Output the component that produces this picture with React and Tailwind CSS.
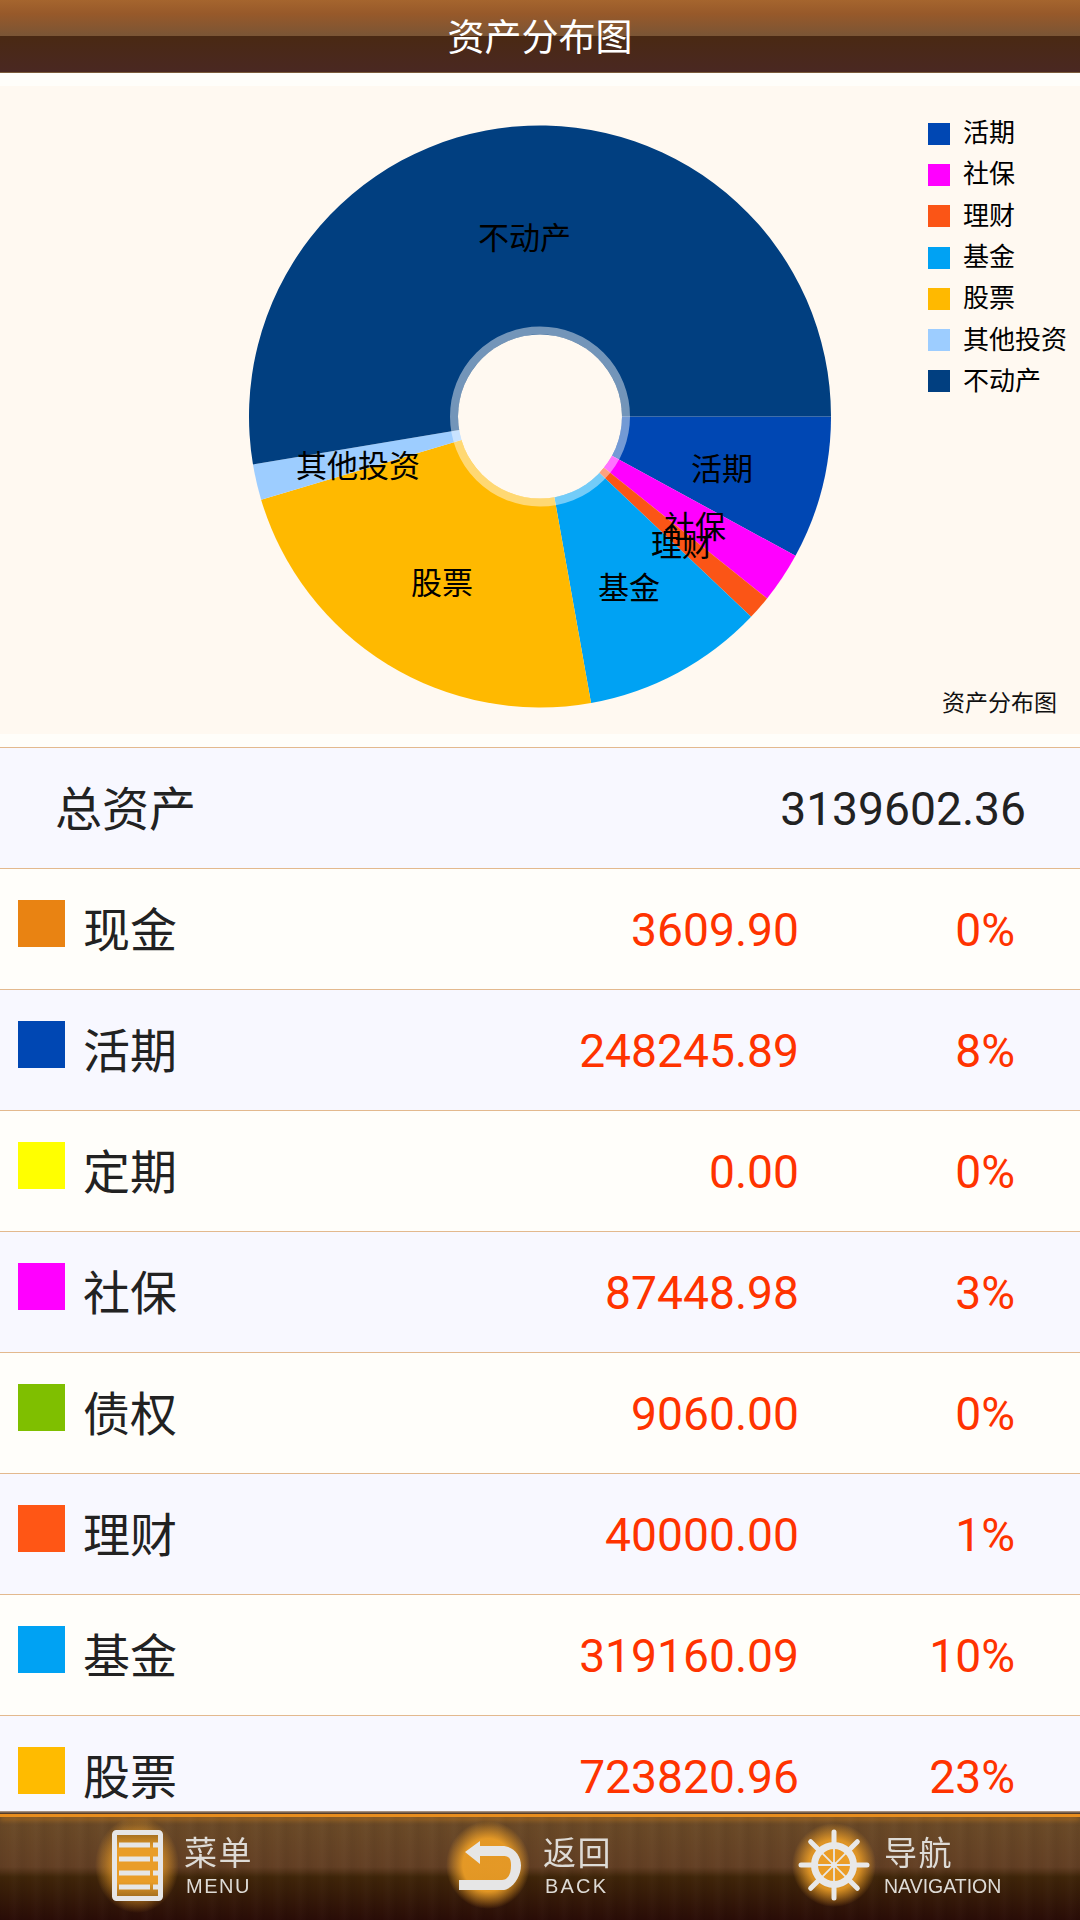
import React from 'react';

const SLICES = [
  { name: '活期', color: '#0047b3', end: 28.6 },
  { name: '社保', color: '#ff00ff', end: 38.7 },
  { name: '理财', color: '#fb5516', end: 43.5 },
  { name: '基金', color: '#00a2f3', end: 79.9 },
  { name: '股票', color: '#ffb900', end: 163.4 },
  { name: '其他投资', color: '#9dcdff', end: 170.5 },
  { name: '不动产', color: '#013f80', end: 360 },
];

const LABELS = [
  { name: '不动产', x: 478, y: 152 },
  { name: '活期', x: 691, y: 383 },
  { name: '社保', x: 664, y: 441 },
  { name: '理财', x: 651, y: 459 },
  { name: '基金', x: 598, y: 502 },
  { name: '股票', x: 411, y: 497 },
  { name: '其他投资', x: 296, y: 380 },
];

const ROWS = [
  { name: '现金', color: '#e98312', amount: '3609.90', pct: '0%' },
  { name: '活期', color: '#0047b3', amount: '248245.89', pct: '8%' },
  { name: '定期', color: '#ffff00', amount: '0.00', pct: '0%' },
  { name: '社保', color: '#ff00ff', amount: '87448.98', pct: '3%' },
  { name: '债权', color: '#7fbf00', amount: '9060.00', pct: '0%' },
  { name: '理财', color: '#ff5615', amount: '40000.00', pct: '1%' },
  { name: '基金', color: '#00a2f3', amount: '319160.09', pct: '10%' },
  { name: '股票', color: '#ffbb00', amount: '723820.96', pct: '23%' },
];

const slicePath = (from, to) => {
  const cx = 540;
  const cy = 330.5;
  const r = 291;
  const rad = (d) => (d * Math.PI) / 180;
  const x1 = cx + r * Math.cos(rad(from));
  const y1 = cy + r * Math.sin(rad(from));
  const x2 = cx + r * Math.cos(rad(to));
  const y2 = cy + r * Math.sin(rad(to));
  const large = to - from > 180 ? 1 : 0;
  return `M${cx} ${cy}L${x1} ${y1}A${r} ${r} 0 ${large} 1 ${x2} ${y2}Z`;
};

function PieChart() {
  return (
    <div className="relative mt-[13px] h-[648px] shrink-0 bg-[#fff9f1]">
      <svg viewBox="0 0 1080 648" className="block h-full w-full">
        {SLICES.map((s, i) => (
          <path key={s.name} d={slicePath(i === 0 ? 0 : SLICES[i - 1].end, s.end)} fill={s.color} />
        ))}
        <circle cx="540" cy="330.5" r="86" fill="none" stroke="#fff" strokeOpacity="0.45" strokeWidth="8" />
        <circle cx="540" cy="330.5" r="82" fill="#fff9f1" />
        {LABELS.map((l) => (
          <text key={l.name} x={l.x} y={l.y} fontSize="31" fill="#000" dominantBaseline="central">
            {l.name}
          </text>
        ))}
      </svg>
      {/* legend sits on top of the chart, like in the canvas */}
      <div className="absolute left-[928px] top-[27px] flex flex-col text-[26px] text-black">
        {SLICES.map((s) => (
          <div key={s.name} className="flex h-[41.3px] items-center gap-[13px] whitespace-nowrap">
            <span className="h-[22px] w-[22px] shrink-0" style={{ backgroundColor: s.color }}></span>
            <span>{s.name}</span>
          </div>
        ))}
      </div>
      <div className="absolute right-[23px] top-[603px] text-[23px] leading-[30px] text-[#111]">资产分布图</div>
    </div>
  );
}

function MenuIcon() {
  return (
    <svg width="51" height="71" viewBox="0 0 51 71" className="overflow-visible">
      <defs>
        <radialGradient id="menuGlow">
          <stop offset="0.6" stopColor="#eb9d26" stopOpacity="0.7" />
          <stop offset="1" stopColor="#eb9d26" stopOpacity="0" />
        </radialGradient>
        <linearGradient id="menuFill" x1="0" y1="0" x2="0" y2="1">
          <stop offset="0" stopColor="#9c6a1f" />
          <stop offset="0.25" stopColor="#e99d28" />
          <stop offset="0.75" stopColor="#e99d28" />
          <stop offset="1" stopColor="#9c6a1f" />
        </linearGradient>
      </defs>
      <ellipse cx="25" cy="35" rx="42" ry="48" fill="url(#menuGlow)" />
      <rect x="2.5" y="2.5" width="46" height="66" rx="2" fill="url(#menuFill)" stroke="#e6e6e6" strokeWidth="5" />
      {[15, 29, 43, 57].map((y) => (
        <g key={y} fill="#e6e6e6">
          <rect x="7" y={y - 2.5} width="31" height="5" />
          <rect x="41" y={y - 2.5} width="5" height="5" />
        </g>
      ))}
    </svg>
  );
}

function BackIcon() {
  return (
    <svg width="62" height="49" viewBox="0 0 62 49" className="overflow-visible">
      <defs>
        <radialGradient id="backGlow">
          <stop offset="0.6" stopColor="#eb9d26" stopOpacity="0.95" />
          <stop offset="1" stopColor="#eb9d26" stopOpacity="0" />
        </radialGradient>
      </defs>
      <ellipse cx="29" cy="24" rx="42" ry="44" fill="url(#backGlow)" />
      <path
        d="M6 11 21 0v5h22c11 0 19 9 19 19.5S54 49 43 49H0V39h43c6 0 9-6 9-14.500S49 15 43 15H21v8Z"
        fill="#e6e6e6"
      />
    </svg>
  );
}

function WheelIcon() {
  const angles = [0, 45, 90, 135, 180, 225, 270, 315];
  return (
    <svg width="72" height="72" viewBox="-36 -36 72 72" className="overflow-visible">
      <defs>
        <radialGradient id="wheelGlow">
          <stop offset="0.6" stopColor="#eb9d26" stopOpacity="0.9" />
          <stop offset="1" stopColor="#eb9d26" stopOpacity="0" />
        </radialGradient>
      </defs>
      <circle r="42" fill="url(#wheelGlow)" />
      <circle r="17" fill="#eb9d26" />
      {angles.map((a) => (
        <g key={a} transform={`rotate(${a})`} stroke="#e8e8e8" strokeLinecap="round">
          <line x1="22" y1="0" x2="33" y2="0" strokeWidth="5" />
          <line x1="2" y1="0" x2="17" y2="0" strokeWidth="1.8" />
        </g>
      ))}
      <circle r="19.5" fill="none" stroke="#e8e8e8" strokeWidth="7" />
      <circle r="3" fill="#e8e8e8" />
    </svg>
  );
}

function NavItem({ width, iconWidth, icon, title, sub, subClass }) {
  return (
    <div className="flex items-center" style={{ width }}>
      <div className="flex shrink-0 items-center" style={{ width: iconWidth }}>{icon}</div>
      <div className="mt-[5px] flex flex-col items-start text-[#dedbd6] blur-[0.4px]">
        <span className="text-[33px] leading-[36px] tracking-[1.5px]">{title}</span>
        <span className={`mt-[1px] font-['Liberation_Sans',sans-serif] leading-[26px] ${subClass}`}>{sub}</span>
      </div>
    </div>
  );
}

export default function App() {
  return (
    <div className="flex h-[1920px] w-[1080px] flex-col overflow-hidden bg-[#fffefa] font-[Roboto,'Noto_Sans_CJK_SC',sans-serif]">
      {/* HEADER */}
      <header className="flex h-[73px] shrink-0 items-center justify-center border-b border-[#7c5c3c] bg-[linear-gradient(to_bottom,#a5652e_0,#97592a_14px,#7a5535_36px,#4a2913_36px,#4a2822_72px)] pt-[5px]">
        <h1 className="text-[37px] font-normal leading-none text-white">资产分布图</h1>
      </header>

      <PieChart />

      {/* TABLE */}
      <div className="mt-[13px] min-h-0 flex-1 overflow-hidden border-t border-[#e3b98e]">
        <div className="flex h-[121px] items-center border-b border-[#e3b98e] bg-[#f8f8ff] pl-[55px] pr-[54px] pt-[4px] text-[46.2px] text-[#222]">
          <span className="flex-1 text-[47px]">总资产</span>
          <span>3139602.36</span>
        </div>
        {ROWS.map((r, i) => (
          <div
            key={r.name}
            className={`flex h-[121px] items-center border-b border-[#e3b98e] pr-[65px] pt-[4px] text-[46.2px] ${i % 2 === 0 ? 'bg-[#fffefa]' : 'bg-[#f8f8ff]'}`}
          >
            <span className="mb-[16px] ml-[18px] h-[47px] w-[47px] shrink-0" style={{ backgroundColor: r.color }}></span>
            <span className="ml-[18px] flex-1 text-[47px] text-[#222]">{r.name}</span>
            <span className="text-[#ff3300]">{r.amount}</span>
            <span className="w-[216px] text-right text-[#ff3300]">{r.pct}</span>
          </div>
        ))}
      </div>

      {/* BOTTOM NAV */}
      <footer className="relative flex h-[109px] shrink-0 flex-col">
        <div className="h-[3px] bg-[linear-gradient(to_bottom,#b9a594,#3a2415)]"></div>
        <div className="relative z-10 h-[3px] bg-[#e88d1e] shadow-[0_3px_5px_rgba(232,141,30,0.55)]"></div>
        <div className="flex flex-1 items-center bg-[repeating-linear-gradient(90deg,rgba(0,0,0,0.04)_0,rgba(0,0,0,0)_8px,rgba(255,255,255,0.015)_14px,rgba(0,0,0,0.04)_22px),linear-gradient(to_bottom,#6b4b27_0,#633f24_50px,#3f2509_60px,#2a0c07_100%)] pb-[7px] pl-[112px]">
          <NavItem width={347} iconWidth={72} icon={<MenuIcon />} title="菜单" sub="MENU" subClass="pl-[2px] text-[20px] tracking-[1.5px]" />
          <NavItem width={339} iconWidth={84} icon={<BackIcon />} title="返回" sub="BACK" subClass="pl-[2px] text-[20px] tracking-[2.2px]" />
          <NavItem width={282} iconWidth={86} icon={<WheelIcon />} title="导航" sub="NAVIGATION" subClass="text-[19.5px]" />
        </div>
      </footer>
    </div>
  );
}
